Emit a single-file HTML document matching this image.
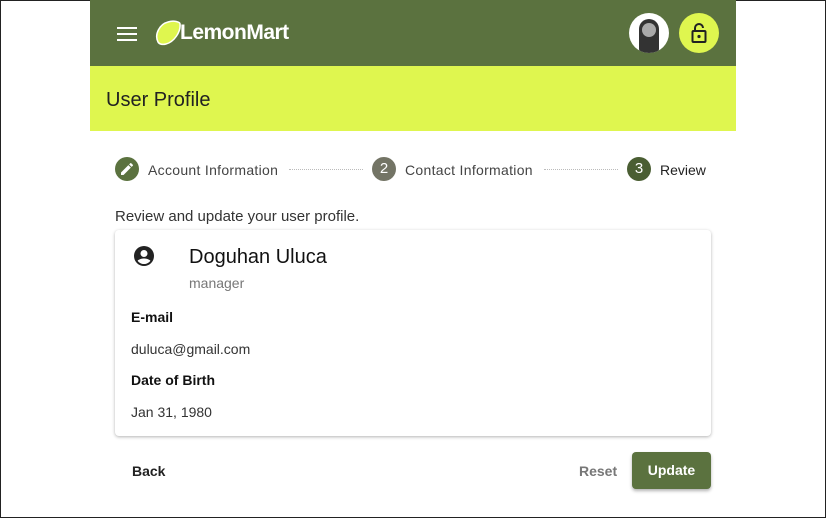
<!DOCTYPE html>
<html><head><style>
*{box-sizing:border-box;margin:0;padding:0}
body{width:826px;height:518px;overflow:hidden;background:#fff;font-family:"Liberation Sans",sans-serif;position:relative}
.abs{position:absolute}
</style></head><body>
<div class="abs" style="left:0;top:0;width:826px;height:518px;border:1px solid #222"></div>
<div class="abs" style="left:90px;top:0;width:646px;height:66px;background:#5b723f"></div>
<div class="abs" style="left:90px;top:66px;width:646px;height:65px;background:#dff64f"></div>
<div class="abs" style="left:117px;top:27px;width:20px;height:2px;background:#fff;box-shadow:0 6px 0 #fff,0 12px 0 #fff"></div>
<svg class="abs" style="left:154px;top:20px" width="28" height="26" viewBox="0 0 28 26"><path d="M4 22 C0 14 6 4 14 2 C20 0 26 2 26 4 C27 12 20 22 12 24 C8 25 5 24 4 22Z" fill="#dff64f" stroke="#fff" stroke-width="1.5"/></svg>
<div class="abs" style="left:180px;top:21px;color:#fff;font-size:21px;font-weight:bold;letter-spacing:-0.5px">LemonMart</div>
<div class="abs" style="left:629px;top:13px;width:40px;height:40px;border-radius:50%;background:#fff;overflow:hidden"><div style="position:absolute;left:10px;top:6px;width:20px;height:34px;border-radius:10px 10px 4px 4px;background:#333"></div><div style="position:absolute;left:13px;top:10px;width:14px;height:14px;border-radius:50%;background:#aaa"></div></div>
<div class="abs" style="left:679px;top:13px;width:40px;height:40px;border-radius:50%;background:#dff64f"></div>
<svg class="abs" style="left:689px;top:22px" width="20" height="22" viewBox="0 0 20 22"><path d="M6 9V6a4 4 0 0 1 8 0" fill="none" stroke="#222" stroke-width="2"/><rect x="3.5" y="9" width="13" height="11" rx="1" fill="none" stroke="#222" stroke-width="2"/><circle cx="10" cy="14.5" r="1.6" fill="#222"/></svg>
<div class="abs" style="left:106px;top:89px;font-size:20px;color:#222">User Profile</div>

<div class="abs" style="left:115px;top:157px;width:24px;height:24px;border-radius:50%;background:#5b723f"></div>
<svg class="abs" style="left:119px;top:161px" width="16" height="16" viewBox="0 0 24 24"><path d="M3 17.25V21h3.75L17.8 9.940l-3.75-3.75L3 17.25zM20.7 7.04a1 1 0 0 0 0-1.41l-2.340-2.34a1 1 0 0 0-1.41 0l-1.83 1.83 3.75 3.75 1.83-1.83z" fill="#fff"/></svg>
<div class="abs" style="left:148px;top:162px;font-size:14px;color:#444;letter-spacing:0.3px">Account Information</div>
<div class="abs" style="left:289px;top:169px;width:74px;border-top:1px dotted #bbb"></div>
<div class="abs" style="left:372px;top:157px;width:24px;height:24px;border-radius:50%;background:#737465;color:#fff;font-size:15px;text-align:center;line-height:24px">2</div>
<div class="abs" style="left:405px;top:162px;font-size:14px;color:#444;letter-spacing:0.3px">Contact Information</div>
<div class="abs" style="left:544px;top:169px;width:74px;border-top:1px dotted #bbb"></div>
<div class="abs" style="left:627px;top:157px;width:24px;height:24px;border-radius:50%;background:#4a5e33;color:#fff;font-size:15px;text-align:center;line-height:24px">3</div>
<div class="abs" style="left:660px;top:162px;font-size:14px;color:#222">Review</div>

<div class="abs" style="left:115px;top:208px;font-size:15px;color:#333">Review and update your user profile.</div>
<div class="abs" style="left:115px;top:230px;width:596px;height:206px;border-radius:4px;box-shadow:0 1px 3px rgba(0,0,0,0.3);background:#fff"></div>
<svg class="abs" style="left:132px;top:244px" width="24" height="24" viewBox="0 0 24 24"><path d="M12 2a10 10 0 1 0 0 20 10 10 0 0 0 0-20zm0 4a3.5 3.5 0 1 1 0 7 3.5 3.5 0 0 1 0-7zm0 14c-2.7 0-5-1.3-6.4-3.3C7 15.2 10 14.5 12 14.5s5 .7 6.4 2.2C17 18.7 14.7 20 12 20z" fill="#222"/></svg>
<div class="abs" style="left:189px;top:246px;font-size:20px;color:#111">Doguhan Uluca</div>
<div class="abs" style="left:189px;top:275px;font-size:14px;color:#777">manager</div>
<div class="abs" style="left:131px;top:309px;font-size:14px;font-weight:bold;color:#111">E-mail</div>
<div class="abs" style="left:131px;top:341px;font-size:14px;color:#333">duluca@gmail.com</div>
<div class="abs" style="left:131px;top:372px;font-size:14px;font-weight:bold;color:#111">Date of Birth</div>
<div class="abs" style="left:131px;top:404px;font-size:14px;color:#333">Jan 31, 1980</div>

<div class="abs" style="left:132px;top:463px;font-size:14px;font-weight:bold;color:#222">Back</div>
<div class="abs" style="left:579px;top:463px;font-size:14px;font-weight:bold;color:#777">Reset</div>
<div class="abs" style="left:632px;top:452px;width:79px;height:37px;border-radius:4px;background:#5b723f;box-shadow:0 2px 3px rgba(0,0,0,0.3);color:#fff;font-size:14px;font-weight:bold;text-align:center;line-height:37px">Update</div>
</body></html>
